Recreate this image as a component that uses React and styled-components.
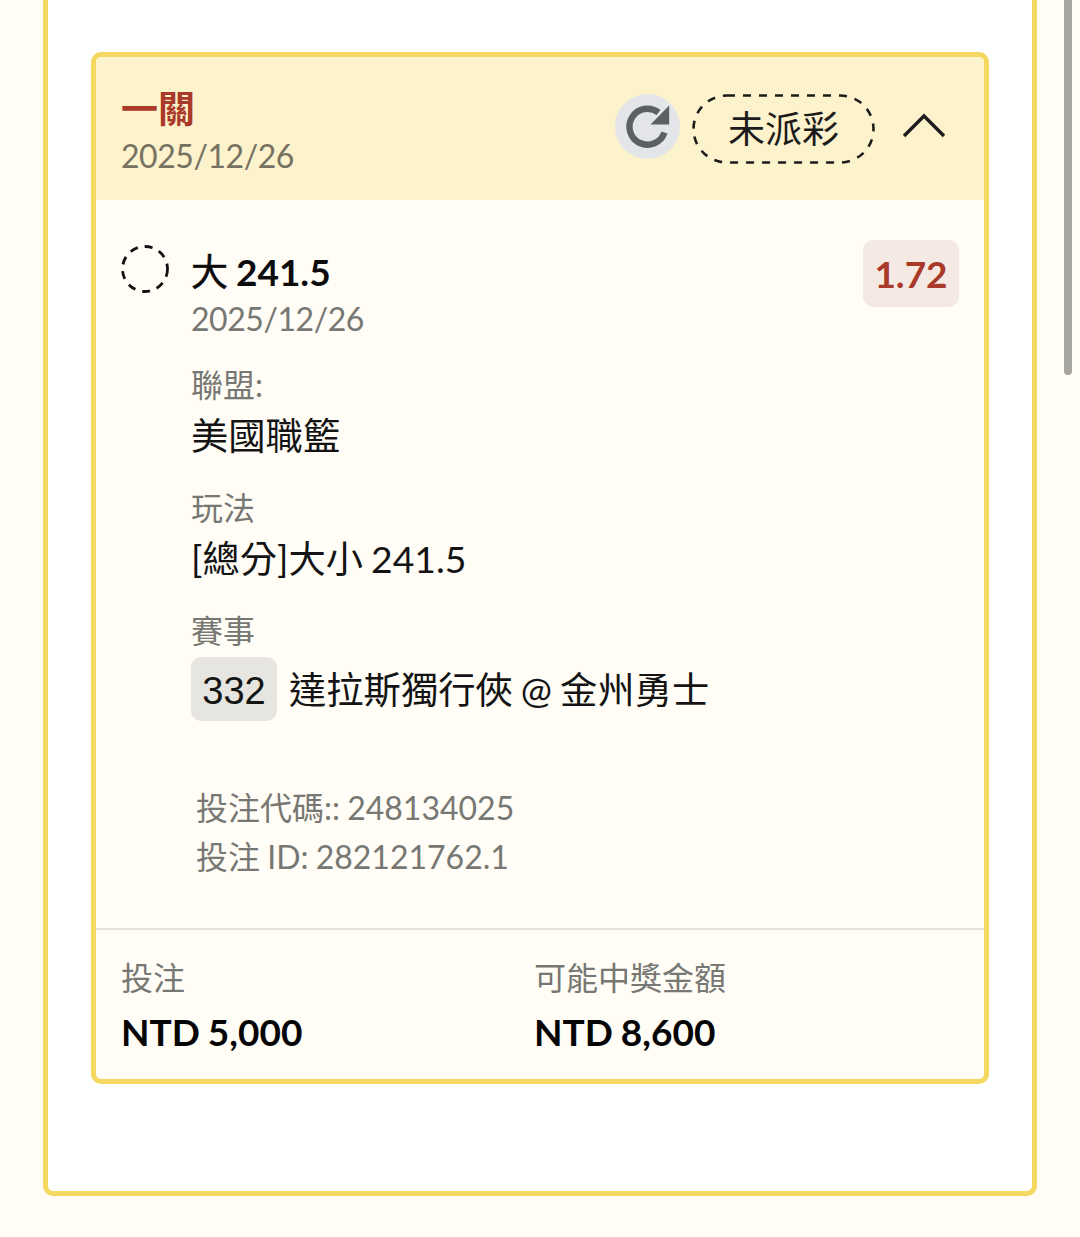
import React from 'react'
import styled, { createGlobalStyle } from 'styled-components'

const GlobalStyle = createGlobalStyle`
  html, body {
    margin: 0;
    padding: 0;
    background: #fffdf5;
    overflow: hidden;
  }
  body {
    font-family: Lato, "Noto Sans CJK TC", sans-serif;
    color: #111;
  }
`

const Page = styled.div`
  position: relative;
  width: 1080px;
  height: 1237px;
  box-sizing: border-box;
  padding: 0 43px;
  overflow: hidden;
`

const ScrollThumb = styled.div`
  position: absolute;
  top: -10px;
  right: 8px;
  width: 8px;
  height: 385px;
  border-radius: 4px;
  background: #a8a6a0;
`

const Panel = styled.div`
  box-sizing: border-box;
  height: 1196px;
  padding: 52px 43px 0;
  background: #fff;
  border: 5px solid #f5d860;
  border-top: 0;
  border-radius: 0 0 10px 10px;
`

const Card = styled.section`
  box-sizing: border-box;
  height: 1032px;
  display: flex;
  flex-direction: column;
  background: #fffdf6;
  border: 5px solid #f5d860;
  border-radius: 10px;
  overflow: hidden;
`

const Header = styled.header`
  height: 143px;
  flex: none;
  box-sizing: border-box;
  padding: 0 38px 0 25px;
  display: flex;
  align-items: center;
  justify-content: space-between;
  background: #fcf2cc;
`

const HeaderText = styled.div`
  padding-top: 7px;
`

const Title = styled.div`
  font-size: 37px;
  line-height: 46px;
  font-weight: 700;
  color: #a93a2a;
`

const DateText = styled.div`
  font-size: 32px;
  letter-spacing: -0.45px;
  line-height: 46px;
  padding-top: 1px;
  margin-bottom: -1px;
  color: ${props => props.$dark ? '#767161' : '#777773'};
`

const HeaderActions = styled.div`
  display: flex;
  align-items: center;
`

const RefreshButton = styled.button`
  width: 65px;
  height: 65px;
  padding: 0;
  margin: 0 12px 5px 0;
  border: 0;
  border-radius: 50%;
  display: flex;
  align-items: center;
  justify-content: center;
  background: #e3e5e8;
`

const RefreshIcon = styled.svg`
  width: 65px;
  height: 65px;
`

const StatusPill = styled.div`
  position: relative;
  width: 183px;
  height: 70px;
  padding-bottom: 3px;
  box-sizing: border-box;
  display: flex;
  align-items: center;
  justify-content: center;
  font-size: 37px;
  color: #1c1c1c;
`

const PillOutline = styled.svg`
  position: absolute;
  inset: 0;
  width: 100%;
  height: 100%;
`

const Chevron = styled.svg`
  width: 44px;
  height: 26px;
  margin: 0 0 8px 27px;
`

const Body = styled.div`
  flex: 1;
  box-sizing: border-box;
  padding: 40px 25px 0;
`

const BetRow = styled.div`
  display: flex;
  align-items: flex-start;
`

const StatusCircle = styled.svg`
  width: 48px;
  height: 48px;
  margin: 5px 22px 0 0;
  flex: none;
`

const BetInfo = styled.div`
  flex: 1;
`

const BetName = styled.div`
  font-size: 37px;
  line-height: 46px;
  margin-top: 9px;
  font-weight: 700;
  word-spacing: -1px;
  color: #0c0c0c;
`

const BetLight = styled.span`
  font-weight: 400;
  -webkit-text-stroke: 0.5px #0c0c0c;
`

const Odds = styled.div`
  width: 96px;
  height: 67px;
  display: flex;
  align-items: center;
  justify-content: center;
  border-radius: 10px;
  background: #f5e9e3;
  font-size: 37px;
  font-weight: 700;
  color: #a93a2a;
`

const Details = styled.div`
  padding-left: 70px;
`

const Field = styled.div`
  margin-top: ${props => props.$gap}px;
`

const FieldLabel = styled.div`
  font-size: 32px;
  line-height: 46px;
  padding-top: 1px;
  margin-bottom: -1px;
  color: #777773;
`

const FieldValue = styled.div`
  font-size: 37.3px;
  line-height: 60px;
  margin-top: -2px;
  word-spacing: -1.5px;
  color: #141414;
`

const MatchRow = styled.div`
  display: flex;
  align-items: center;
  margin-top: 4px;
  font-size: 37.3px;
  word-spacing: -1.5px;
  color: #141414;
`

const MatchNumber = styled.span`
  box-sizing: border-box;
  width: 86px;
  height: 64px;
  margin-right: 12px;
  padding-top: 5px;
  display: flex;
  align-items: center;
  justify-content: center;
  border-radius: 10px;
  background: #e6e5e0;
  font-family: "Liberation Sans", sans-serif;
  font-size: 38px;
`

const MatchName = styled.span`
  margin-bottom: 2px;
`

const Codes = styled.div`
  margin: 62px 0 0 75px;
  font-size: 32px;
  line-height: 49px;
  word-spacing: -1px;
  color: #777773;
`

const Footer = styled.footer`
  height: 151px;
  flex: none;
  box-sizing: border-box;
  padding: 24px 25px 0;
  display: grid;
  grid-template-columns: 413px 1fr;
  border-top: 2px solid #e4e3de;
`

const FooterLabel = styled.div`
  font-size: 32px;
  line-height: 46px;
  padding-top: 1px;
  margin-bottom: -1px;
  color: #777773;
`

const FooterValue = styled.div`
  font-size: 37px;
  line-height: 46px;
  margin-top: 9px;
  font-weight: 700;
  word-spacing: -1px;
  color: #050505;
`

export default function App() {
  return (
    <Page>
      <GlobalStyle />
      <Panel>
        <Card>
          <Header>
            <HeaderText>
              <Title>一關</Title>
              <DateText $dark>2025/12/26</DateText>
            </HeaderText>
            <HeaderActions>
              <RefreshButton aria-label="重新整理">
                <RefreshIcon viewBox="-32.5 -32.5 65 65">
                  <path d="M11 -14 A18 18 0 1 0 17 6" fill="none" stroke="#5c5f63" strokeWidth="6.4" />
                  <polygon points="21.7,-21 21.7,-2 3,-2" fill="#5c5f63" />
                </RefreshIcon>
              </RefreshButton>
              <StatusPill>
                <PillOutline viewBox="0 0 183 70" fill="none" stroke="#1c1c1c" strokeWidth="2.6">
                  <rect x="1.5" y="1.5" width="180" height="67" rx="33.5" strokeDasharray="8 8" />
                </PillOutline>
                未派彩
              </StatusPill>
              <Chevron viewBox="0 0 44 26" fill="none" stroke="#1c1c1c" strokeWidth="3.4">
                <polyline points="2,24 22,4 42,24" />
              </Chevron>
            </HeaderActions>
          </Header>
          <Body>
            <BetRow>
              <StatusCircle viewBox="0 0 48 48" fill="none" stroke="#111" strokeWidth="2.8">
                <circle cx="24" cy="24" r="22.5" strokeDasharray="8 7" />
              </StatusCircle>
              <BetInfo>
                <BetName><BetLight>大</BetLight> 241.5</BetName>
                <DateText>2025/12/26</DateText>
              </BetInfo>
              <Odds>1.72</Odds>
            </BetRow>
            <Details>
              <Field $gap={20}>
                <FieldLabel>聯盟:</FieldLabel>
                <FieldValue>美國職籃</FieldValue>
              </Field>
              <Field $gap={18}>
                <FieldLabel>玩法</FieldLabel>
                <FieldValue>[總分]大小 241.5</FieldValue>
              </Field>
              <Field $gap={18}>
                <FieldLabel>賽事</FieldLabel>
                <MatchRow>
                  <MatchNumber>332</MatchNumber>
                  <MatchName>達拉斯獨行俠 @ 金州勇士</MatchName>
                </MatchRow>
              </Field>
            </Details>
            <Codes>
              <div>投注代碼:: 248134025</div>
              <div>投注 ID: 282121762.1</div>
            </Codes>
          </Body>
          <Footer>
            <div>
              <FooterLabel>投注</FooterLabel>
              <FooterValue>NTD 5,000</FooterValue>
            </div>
            <div>
              <FooterLabel>可能中獎金額</FooterLabel>
              <FooterValue>NTD 8,600</FooterValue>
            </div>
          </Footer>
        </Card>
      </Panel>
      <ScrollThumb />
    </Page>
  )
}
